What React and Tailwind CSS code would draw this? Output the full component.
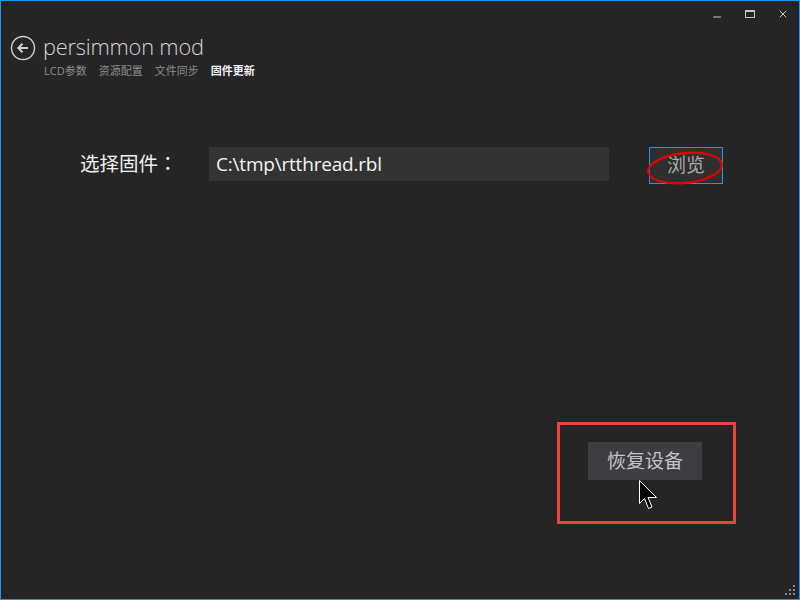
import { Minus, X } from 'lucide-react'

const cjk = { fontFamily: '"Open Sans", "Noto Sans CJK SC", sans-serif' }

function BackIcon() {
  return (
    <svg width="26" height="26" viewBox="0 0 26 26" className="text-[#d0d0d0]">
      <circle cx="13" cy="13" r="11.5" fill="none" stroke="currentColor" strokeWidth="1.4" />
      <path d="M18 13H8.5M12.5 8.8L8.3 13l4.2 4.2" fill="none" stroke="currentColor" strokeWidth="2" />
    </svg>
  )
}

function Cursor() {
  return (
    <svg width="20" height="32" viewBox="0 0 20 32" className="absolute left-[638px] top-[479px]">
      <path d="M0.5 0.5V23.5L5.5 18.5L9.5 28.5L13 27L9 17.5H17.5Z" fill="#000" stroke="#fff" strokeWidth="1" />
    </svg>
  )
}

function Grip() {
  const dots = [[8, 0], [4, 4], [8, 4], [0, 8], [4, 8], [8, 8]]
  return (
    <svg width="11" height="11" className="absolute right-[3px] bottom-[3px]">
      {dots.map(([x, y], i) => (
        <rect key={i} x={x} y={y} width="2" height="2" fill="#8a8a8a" />
      ))}
    </svg>
  )
}

export default function App() {
  return (
    <div
      className="relative w-[800px] h-[600px] bg-[#252525] border border-[#1c97ea] overflow-hidden flex flex-col"
      style={cjk}
    >
      {/* title bar */}
      <div className="h-[29px] flex justify-end items-start text-[#c8c8c8]">
        <div className="w-[33px] h-[28px] flex items-center justify-center">
          <Minus size={12} strokeWidth={2} className="mt-[3px]" />
        </div>
        <div className="w-[33px] h-[28px] flex items-center justify-center">
          <div className="w-[10px] h-[8px] border border-[#c8c8c8] border-t-2 mb-[2px]" />
        </div>
        <div className="w-[33px] h-[28px] flex items-center justify-center">
          <X size={12} strokeWidth={2} className="mb-[2px]" />
        </div>
      </div>

      {/* header */}
      <div className="flex items-center pl-[9px] h-[36px]">
        <BackIcon />
        <span className="ml-[7px] text-[21.8px] font-light text-[#d4d4d4] tracking-[-0.2px] leading-none pb-[2px]">
          persimmon mod
        </span>
      </div>
      <div className="flex gap-[12px] pl-[43px] mt-[-2px] text-[11px] leading-[14px] text-[#8c8c8c]">
        <span>LCD参数</span>
        <span>资源配置</span>
        <span>文件同步</span>
        <span className="font-bold text-[#f4f4f4]">固件更新</span>
      </div>

      {/* firmware row */}
      <div className="relative flex items-center mt-[69px] h-[37px]">
        <span className="ml-[79px] w-[129px] text-[19.5px] text-[#f0f0f0] mb-[4px]">
          选择固件<span className="font-['Noto_Sans_CJK_TC',sans-serif]">：</span>
        </span>
        <div className="w-[400px] h-[34px] bg-[#333333] flex items-center pl-[7px] self-start">
          <span className="text-[19px] text-[#f4f4f4] tracking-[-0.2px]">C:\tmp\rtthread.rbl</span>
        </div>
        <button className="ml-[40px] w-[74px] h-[37px] border border-[#1c97ea] bg-[#2f2f2f] text-[19px] text-[#a8a8a8] flex items-center justify-center">
          浏览
        </button>
        <svg width="84" height="42" className="absolute left-[643px] top-[0px]">
          <ellipse cx="41" cy="21" rx="37" ry="15" fill="none" stroke="#e60000" strokeWidth="2.2" transform="rotate(-6 41 21)" />
        </svg>
      </div>

      {/* restore */}
      <div className="ml-[556px] mt-[238px] w-[179px] h-[102px] border-[3px] border-[#e8453c] pl-[28px] pt-[17px]">
        <button className="w-[114px] h-[38px] bg-[#3e3d42] text-[19px] text-[#c4c4c4] flex items-center justify-center">
          恢复设备
        </button>
      </div>

      <Cursor />
      <Grip />
    </div>
  )
}
